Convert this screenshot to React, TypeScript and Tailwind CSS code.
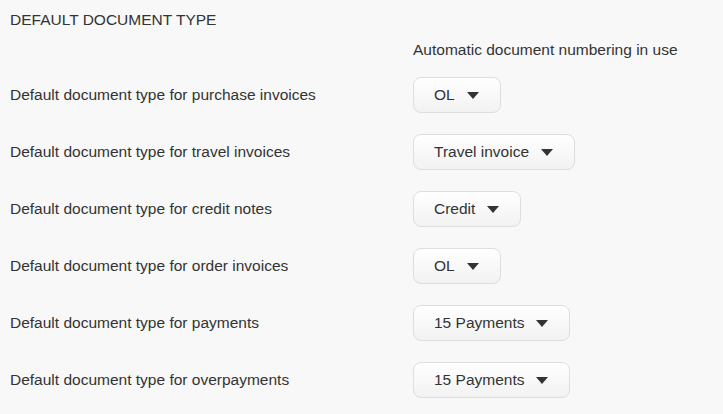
import React from "react";

const rows = [
  { label: "Default document type for purchase invoices", value: "OL" },
  { label: "Default document type for travel invoices", value: "Travel invoice" },
  { label: "Default document type for credit notes", value: "Credit" },
  { label: "Default document type for order invoices", value: "OL" },
  { label: "Default document type for payments", value: "15 Payments" },
  { label: "Default document type for overpayments", value: "15 Payments" },
];

function Select({ value }: { value: string }) {
  return (
    <button className="flex h-[36px] items-center gap-[12px] rounded-[8px] border border-[#dedede] bg-gradient-to-b from-white to-[#f2f2f2] pl-[20px] pr-[21px] text-[15.5px] text-[#333]">
      <span>{value}</span>
      <svg width="12" height="7" viewBox="0 0 12 7" className="block">
        <path d="M0 0 L12 0 L6 7 Z" fill="#333" />
      </svg>
    </button>
  );
}

export default function App() {
  return (
    <div
      className="h-[414px] w-[723px] bg-[#f8f8f8] px-[10px] pt-[10px] text-[15.5px] text-[#333]"
      style={{ fontFamily: '"Liberation Sans", Arial, sans-serif' }}
    >
      <div className="h-[20px] leading-[20px]">DEFAULT DOCUMENT TYPE</div>
      <div className="mt-[10px] flex h-[20px] leading-[20px]">
        <div className="w-[403px]" />
        <div>Automatic document numbering in use</div>
      </div>
      <div className="mt-[17px] flex flex-col gap-[21px]">
        {rows.map((r, i) => (
          <div key={i} className="flex items-center">
            <div className="w-[403px]">{r.label}</div>
            <Select value={r.value} />
          </div>
        ))}
      </div>
    </div>
  );
}
